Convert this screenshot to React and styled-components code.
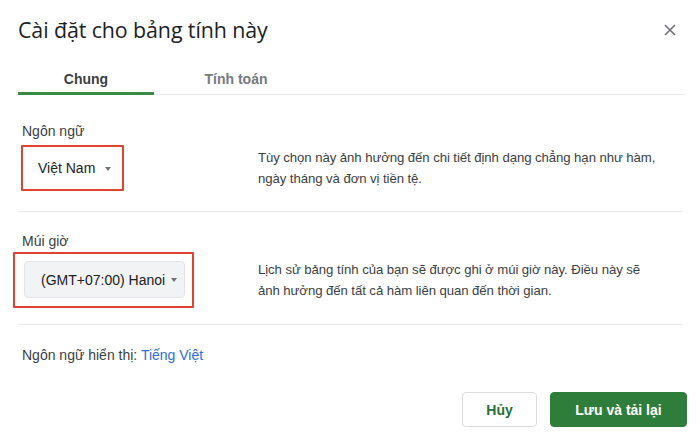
import React from "react";
import styled, { createGlobalStyle } from "styled-components";

const Global = createGlobalStyle`
  html, body { margin: 0; padding: 0; background: #ffffff; }
  body { font-family: "Liberation Sans", Arial, sans-serif; color: #3c4043; }
  * { box-sizing: border-box; }
`;

const Dialog = styled.div`
  width: 700px;
  height: 437px;
  padding: 0 13px 0 18px;
  background: #ffffff;
  display: flex;
  flex-direction: column;
`;

const Header = styled.div`
  display: flex;
  align-items: center;
  justify-content: space-between;
  padding-top: 16px;
  height: 44px;
`;

const Title = styled.h1`
  margin: 0;
  font-family: "Open Sans", "Noto Sans", sans-serif;
  font-weight: 400;
  font-size: 21.4px;
  line-height: 28px;
  color: #202124;
  letter-spacing: -0.1px;
`;

const Close = styled.button`
  border: 0;
  background: none;
  padding: 0;
  width: 12px;
  height: 12px;
  margin-right: 11px;
  display: flex;
  color: #5f6368;
`;

const TabBar = styled.div`
  margin-top: 20px;
  display: flex;
  box-shadow: inset 0 -1px 0 #e8eaed;
  margin-right: 2px;
`;

const Tab = styled.div`
  width: ${(p) => p.$w}px;
  height: 31px;
  display: flex;
  align-items: center;
  justify-content: center;
  padding-top: 2px;
  font-size: 14px;
  font-weight: 700;
  color: ${(p) => (p.$active ? "#3c4043" : "#767a7f")};
  border-bottom: 3px solid ${(p) => (p.$active ? "#3a8a47" : "transparent")};
`;

const Section = styled.section`
  padding: ${(p) => p.$top}px 0 ${(p) => p.$bottom}px 4px;
  border-bottom: 1px solid #e8eaed;
  margin-right: 4px;
`;

const Label = styled.div`
  font-size: 14px;
  line-height: 20px;
  color: #3c4043;
  margin-bottom: ${(p) => p.$gap}px;
`;

const Row = styled.div`
  display: flex;
  align-items: center;
`;

const Control = styled.div`
  width: 236px;
  flex: none;
  display: flex;
`;

const Highlight = styled.div`
  border: 2px solid #e0432f;
  border-radius: 1px;
  padding: ${(p) => p.$pad};
  margin-left: ${(p) => p.$shift}px;
  display: flex;
`;

const Select = styled.div`
  display: flex;
  align-items: center;
  gap: ${(p) => p.$gap}px;
  height: ${(p) => p.$h}px;
  padding: 0 ${(p) => p.$pr}px 0 ${(p) => p.$pl}px;
  font-size: 14px;
  color: #202124;
  background: ${(p) => (p.$filled ? "#f1f3f4" : "transparent")};
  border: 1px solid ${(p) => (p.$filled ? "#e3e5e8" : "transparent")};
  border-radius: 4px;
  white-space: nowrap;
`;

const Caret = styled.span`
  width: 0;
  height: 0;
  border-left: 3.5px solid transparent;
  border-right: 3.5px solid transparent;
  border-top: 4px solid #6f7378;
  margin-top: 1px;
`;

const Description = styled.p`
  margin: 0;
  font-size: 13.2px;
  line-height: 21px;
  letter-spacing: -0.08px;
  color: #3c4043;
  white-space: nowrap;
`;

const DisplayLang = styled.div`
  padding: 20px 0 0 4px;
  font-size: 14px;
  line-height: 20px;
  color: #3c4043;
`;

const Link = styled.a`
  color: #2f6bd3;
  text-decoration: none;
`;

const Footer = styled.div`
  display: flex;
  justify-content: flex-end;
  gap: 13px;
  margin-top: 27px;
`;

const Button = styled.button`
  height: 35px;
  width: ${(p) => p.$w}px;
  border-radius: 4px;
  font-family: "Liberation Sans", Arial, sans-serif;
  font-size: 14px;
  font-weight: 700;
  cursor: pointer;
  border: 1px solid ${(p) => (p.$primary ? "#2f7d3a" : "#dadce0")};
  background: ${(p) => (p.$primary ? "#2f7d3a" : "#ffffff")};
  color: ${(p) => (p.$primary ? "#ffffff" : "#27703a")};
`;

export default function App() {
  return (
    <>
      <Global />
      <Dialog>
        <Header>
          <Title>Cài đặt cho bảng tính này</Title>
          <Close aria-label="Đóng">
            <svg width="12" height="12" viewBox="0 0 12 12">
              <path d="M1 1L11 11M11 1L1 11" stroke="#6f7378" strokeWidth="1.6" />
            </svg>
          </Close>
        </Header>

        <TabBar>
          <Tab $w={136} $active>Chung</Tab>
          <Tab $w={164}>Tính toán</Tab>
        </TabBar>

        <Section $top={26} $bottom={20}>
          <Label $gap={4}>Ngôn ngữ</Label>
          <Row>
            <Control>
              <Highlight $pad="0" $shift={-1}>
                <Select $h={42} $pl={14} $pr={10} $gap={10}>
                  Việt Nam <Caret />
                </Select>
              </Highlight>
            </Control>
            <Description>
              Tùy chọn này ảnh hưởng đến chi tiết định dạng chẳng hạn như hàm,
              <br />
              ngày tháng và đơn vị tiền tệ.
            </Description>
          </Row>
        </Section>

        <Section $top={19} $bottom={16}>
          <Label $gap={1}>Múi giờ</Label>
          <Row>
            <Control>
              <Highlight $pad="7px 7px 8px 9px" $shift={-9}>
                <Select $filled $h={37} $pl={16} $pr={7} $gap={6}>
                  (GMT+07:00) Hanoi <Caret />
                </Select>
              </Highlight>
            </Control>
            <Description>
              Lịch sử bảng tính của bạn sẽ được ghi ở múi giờ này. Điều này sẽ
              <br />
              ảnh hưởng đến tất cả hàm liên quan đến thời gian.
            </Description>
          </Row>
        </Section>

        <DisplayLang>
          Ngôn ngữ hiển thị: <Link href="#">Tiếng Việt</Link>
        </DisplayLang>

        <Footer>
          <Button $w={75}>Hủy</Button>
          <Button $w={137} $primary>Lưu và tải lại</Button>
        </Footer>
      </Dialog>
    </>
  );
}
